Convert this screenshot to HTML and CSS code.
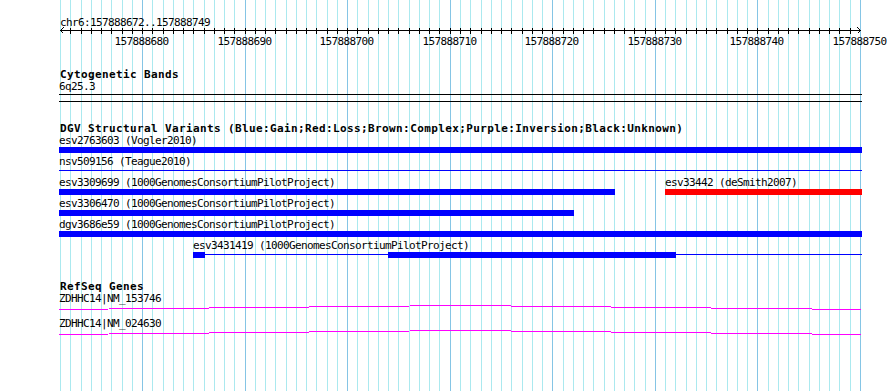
FILE: index.html
```html
<!DOCTYPE html>
<html lang="en">
<head>
    <meta charset="UTF-8">
    <title>chr6:157888672..157888749</title>
    <link rel="stylesheet" href="styles.css">
</head>
<body>
    <div class="panel">
        <svg class="grid" width="890" height="391"></svg>

        <div class="tracks">
            <div class="ruler-title">chr6:157888672..157888749</div>
            <div class="ruler">
                <svg class="ruler-ticks" width="890" height="21">
                    <line x1="60" y1="2.5" x2="861" y2="2.5"/>
                    <polyline points="63.5,-0.5 60.5,2.5 63.5,5.5"/>
                    <polyline points="857.5,-0.5 860.5,2.5 857.5,5.5"/>
                </svg>
            </div>

            <section class="track">
                <h2 class="track-title">Cytogenetic Bands</h2>
                <div class="lane band-lane">
                    <div class="feature" style="left:59px; width:803px">
                        <div class="feature-label">6q25.3</div>
                        <div class="band"></div>
                    </div>
                </div>
            </section>

            <section class="track">
                <h2 class="track-title">DGV Structural Variants (Blue:Gain;Red:Loss;Brown:Complex;Purple:Inversion;Black:Unknown)</h2>
                <div class="lane">
                    <div class="feature" style="left:59px; width:803px">
                        <div class="feature-label">esv2763603 (Vogler2010)</div>
                        <div class="bar"></div>
                    </div>
                </div>
                <div class="lane">
                    <div class="feature" style="left:59px; width:803px">
                        <div class="feature-label">nsv509156 (Teague2010)</div>
                        <div class="connector"></div>
                    </div>
                </div>
                <div class="lane">
                    <div class="feature" style="left:59px; width:556px">
                        <div class="feature-label">esv3309699 (1000GenomesConsortiumPilotProject)</div>
                        <div class="bar"></div>
                    </div>
                    <div class="feature" style="left:665px; width:197px">
                        <div class="feature-label">esv33442 (deSmith2007)</div>
                        <div class="bar loss"></div>
                    </div>
                </div>
                <div class="lane">
                    <div class="feature" style="left:59px; width:515px">
                        <div class="feature-label">esv3306470 (1000GenomesConsortiumPilotProject)</div>
                        <div class="bar"></div>
                    </div>
                </div>
                <div class="lane">
                    <div class="feature" style="left:59px; width:803px">
                        <div class="feature-label">dgv3686e59 (1000GenomesConsortiumPilotProject)</div>
                        <div class="bar"></div>
                    </div>
                </div>
                <div class="lane">
                    <div class="feature" style="left:193px; width:669px">
                        <div class="feature-label">esv3431419 (1000GenomesConsortiumPilotProject)</div>
                        <div class="connector">
                            <div class="block" style="left:0; width:12px"></div>
                            <div class="block" style="left:195px; width:288px"></div>
                        </div>
                    </div>
                </div>
            </section>

            <section class="track">
                <h2 class="track-title">RefSeq Genes</h2>
                <div class="lane gene-lane">
                    <div class="feature" style="left:59px; width:803px">
                        <div class="feature-label">ZDHHC14|NM_153746</div>
                        <svg class="gene" width="803" height="5"><polyline points="0,4.5 401,0.5 802,4.5"/></svg>
                    </div>
                </div>
                <div class="lane gene-lane">
                    <div class="feature" style="left:59px; width:803px">
                        <div class="feature-label">ZDHHC14|NM_024630</div>
                        <svg class="gene" width="803" height="5"><polyline points="0,4.5 401,0.5 802,4.5"/></svg>
                    </div>
                </div>
            </section>
        </div>
    </div>

    <script src="script.js"></script>
</body>
</html>
```

FILE: styles.css
```css
* {
    margin: 0;
    padding: 0;
    box-sizing: border-box;
}

body {
    background: #fff;
    color: #000;
    font-family: 'DejaVu Sans Mono', 'Liberation Mono', monospace;
    font-size: 11px;
    line-height: 11px;
    letter-spacing: -0.62px;
}

.panel {
    position: relative;
    width: 890px;
    height: 391px;
    overflow: hidden;
}

.grid {
    position: absolute;
    top: 0;
    left: 0;
}

.grid line {
    stroke-width: 1;
    shape-rendering: crispEdges;
}

.grid .minor {
    stroke: #abe9ef;
}

.grid .major {
    stroke: #85c5e5;
}

.tracks {
    position: relative;
    padding-top: 17px;
}

.ruler-title {
    padding-left: 60px;
    white-space: nowrap;
}

.ruler {
    position: relative;
    height: 21px;
}

.ruler-ticks {
    position: absolute;
    top: 0;
    left: 0;
    overflow: visible;
}

.ruler-ticks line,
.ruler-ticks polyline {
    stroke: #000;
    stroke-width: 1;
    fill: none;
    shape-rendering: crispEdges;
}

.tick-label {
    position: absolute;
    top: 8px;
    width: 54px;
    text-align: center;
    white-space: nowrap;
}

.track {
    margin-top: 20px;
}

.track-title {
    font-size: 11px;
    font-weight: bold;
    line-height: 11px;
    letter-spacing: 0.38px;
    margin-bottom: 1px;
    padding-left: 60px;
    white-space: nowrap;
}

.lane {
    position: relative;
    height: 21px;
}

.band-lane {
    height: 22px;
}

.gene-lane {
    height: 25px;
}

.feature {
    position: absolute;
    top: 0;
}

.feature-label {
    height: 11px;
    margin-bottom: 1px;
    white-space: nowrap;
}

.bar {
    height: 6px;
    background: #00f;
}

.bar.loss {
    background: #f00;
}

.connector {
    position: relative;
    height: 6px;
}

.connector::before {
    content: '';
    position: absolute;
    top: 2px;
    left: 0;
    right: 0;
    height: 1px;
    background: #00f;
}

.connector .block {
    position: absolute;
    top: 0;
    height: 6px;
    background: #00f;
}

.band {
    height: 8px;
    margin-top: 2px;
    border-top: 1px solid #000;
    border-bottom: 1px solid #000;
}

.gene {
    display: block;
    overflow: visible;
}

.gene polyline {
    stroke: #f0f;
    stroke-width: 1;
    fill: none;
    shape-rendering: crispEdges;
}
```

FILE: script.js
```js
// grid lines and ruler ticks, one per base
const START = 157888672;
const END = 157888750;
const LEFT = 60;
const WIDTH = 800;
const SVG_NS = 'http://www.w3.org/2000/svg';

const scale = WIDTH / (END - START);
const grid = document.querySelector('.grid');
const ticks = document.querySelector('.ruler-ticks');
const ruler = document.querySelector('.ruler');

function toPx(bp) {
    return Math.round(LEFT + (bp - START) * scale);
}

function line(parent, x, y1, y2, cls) {
    const el = document.createElementNS(SVG_NS, 'line');
    el.setAttribute('x1', x);
    el.setAttribute('x2', x);
    el.setAttribute('y1', y1);
    el.setAttribute('y2', y2);
    if (cls) el.setAttribute('class', cls);
    parent.appendChild(el);
}

for (let bp = START; bp <= END; bp++) {
    const x = toPx(bp);
    const major = bp % 10 === 0;

    line(grid, x + 0.5, 0, 391, major ? 'major' : 'minor');

    if (bp > START && bp < END) {
        line(ticks, x + 0.5, 0, 6);
    }

    if (major) {
        const label = document.createElement('div');
        label.className = 'tick-label';
        label.style.left = (x - 27.5) + 'px';
        label.textContent = bp;
        ruler.appendChild(label);
    }
}
```
